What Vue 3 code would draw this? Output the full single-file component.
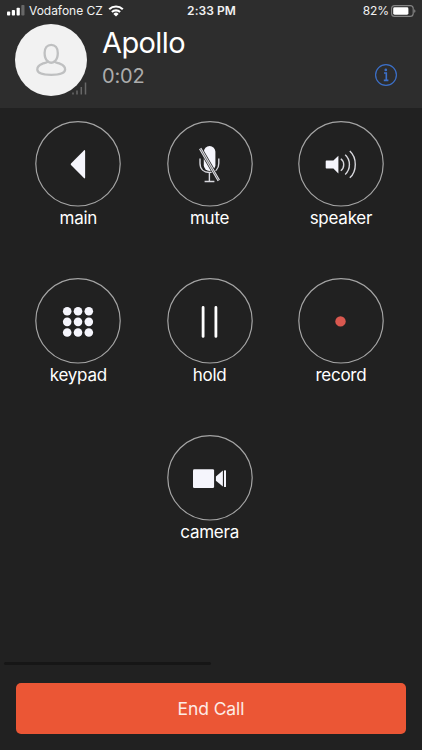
<template>
  <div class="call-screen">
    <header class="header">
      <div class="status-bar">
        <div class="carrier">
          <svg class="signal" width="18" height="11" viewBox="0 0 18 11">
            <rect x="0" y="6.5" width="3.2" height="4" rx=".8" />
            <rect x="4.8" y="5" width="3.2" height="5.5" rx=".8" />
            <rect x="9.6" y="2.8" width="3.2" height="7.7" rx=".8" />
            <rect x="14.3" y="0" width="3.2" height="10.5" rx=".8" opacity=".28" />
          </svg>
          <span class="carrier-name">Vodafone CZ</span>
          <svg class="wifi" width="16" height="12" viewBox="0 0 16 12">
            <path d="M1.2 4.3a9.7 9.7 0 0 1 13.6 0M3.9 7a5.9 5.9 0 0 1 8.2 0" />
            <path class="solid" d="M8 11.5 5.4 8.9a3.7 3.7 0 0 1 5.2 0Z" />
          </svg>
        </div>
        <span class="clock">2:33 PM</span>
        <div class="power">
          <span class="percent">82%</span>
          <svg width="25" height="12" viewBox="0 0 25 12">
            <rect class="shell" x=".6" y=".6" width="21.6" height="10.8" rx="3" />
            <rect x="2.2" y="2.3" width="15.2" height="7.4" rx="1.4" fill="#fff" />
            <path d="M23.2 4.2c1.7.5 1.7 3.1 0 3.6Z" fill="#858585" />
          </svg>
        </div>
      </div>

      <div class="contact">
        <div class="avatar">
          <svg width="72" height="72" viewBox="0 0 72 72">
            <path d="M29.6 29c0-5 2.6-8.1 6.6-8.1s6.6 3.1 6.6 8.1c0 3.5-1.1 6.6-2.9 8.2v.7c1.2 1.1 3.2 1.2 5.3 2 3.3 1.2 4.9 2.8 4.9 5.6 0 3.7-5.6 5.3-13.9 5.3s-13.9-1.6-13.9-5.3c0-2.8 1.6-4.4 4.9-5.6 2.1-.8 4.1-.9 5.3-2v-.7c-1.8-1.6-2.9-4.7-2.9-8.2Z" />
            <path d="M32.5 37.2c2.2 1.9 5.2 1.9 7.4 0" />
          </svg>
          <svg class="quality" width="15" height="13" viewBox="0 0 15 13">
            <path d="M1 10.5v2M5 8.5v4M9.3 5v7.5M13.5 .5v12" />
          </svg>
        </div>
        <div class="caller">
          <h1>Apollo</h1>
          <p>0:02</p>
        </div>
        <svg class="info" width="22" height="22" viewBox="0 0 22 22">
          <circle cx="11" cy="11" r="10.4" />
          <circle class="dot" cx="10.8" cy="5.9" r="1.35" />
          <path d="M9 9h2.3v7.2M8.8 16.4h4.6" />
        </svg>
      </div>
    </header>

    <main class="actions">
      <button v-for="a in actions" :key="a.name" class="action" :class="a.name">
        <svg width="86" height="86" viewBox="0 0 86 86">
          <circle class="ring" cx="43" cy="42.8" r="42.2" />

          <path v-if="a.name === 'main'" class="fill"
                d="M36 42.5 48.9 29.4q1.2-.9 1.2.6v26.5q0 1.5-1.2.6L36 44q-.6-.7 0-1.5Z" />

          <g v-else-if="a.name === 'mute'">
            <rect class="fill" x="36.8" y="25" width="11.6" height="25" rx="5.8" />
            <path class="line" d="M33 37.5v4.8c0 5.8 3.7 9.2 9.4 9.2s9.4-3.4 9.4-9.2v-4.8M42.4 51.5v9M37.6 60.5h9.8" />
            <path class="slash-edge" d="m33.2 27.5 18.6 32" />
            <path class="slash" d="m33.2 27.5 18.6 32" />
            <path class="slash-core" d="m33.2 27.5 18.6 32" />
          </g>

          <g v-else-if="a.name === 'speaker'">
            <path class="fill" d="M28.4 39.6h7l5-4.9v17.7l-5-4.9h-7q-.7 0-.7-.7v-6.5q0-.7.7-.7Z" />
            <path class="line" d="M42.8 37.7c3.9 3 3.9 9 0 12M47.2 33.8c5.6 5 5.6 14.6 0 19.6M51.8 30c7.3 6.7 7.3 20.1 0 26.8" />
          </g>

          <g v-else-if="a.name === 'keypad'" class="fill">
            <circle v-for="n in 9" :key="n" r="4.3"
                    :cx="32.2 + ((n - 1) % 3) * 10.8"
                    :cy="33.2 + Math.floor((n - 1) / 3) * 10.65" />
          </g>

          <path v-else-if="a.name === 'hold'" class="bars" d="M36.1 29.4v29M48.9 29.4v29" />

          <circle v-else-if="a.name === 'record'" cx="42.5" cy="43.4" r="5.2" fill="#d9584f" />

          <g v-else class="fill">
            <rect x="26" y="34.2" width="21.1" height="18.8" rx="1.3" />
            <path d="M48.9 41.4 55.9 35.6v16l-7-5.8Z" />
            <rect x="57" y="35.2" width="2" height="16.8" rx=".6" />
          </g>
        </svg>
        <span>{{ a.name }}</span>
      </button>
    </main>

    <footer class="footer">
      <div class="scroll-track"></div>
      <button class="end-call">End Call</button>
    </footer>
  </div>
</template>

<script setup>
const actions = [
  { name: 'main' },
  { name: 'mute' },
  { name: 'speaker' },
  { name: 'keypad' },
  { name: 'hold' },
  { name: 'record' },
  { name: 'camera' },
]
</script>

<style>
body { margin: 0; background: #212121; }
</style>

<style scoped>
.call-screen {
  display: flex; flex-direction: column; box-sizing: border-box;
  width: 422px; height: 750px; overflow: hidden;
  background: #212121; color: #fff; font-family: Inter, "Liberation Sans", sans-serif;
}
button { padding: 0; border: 0; background: none; color: inherit; font: inherit; }

.header { height: 108px; background: #2d2d2d; }
.status-bar {
  display: grid; grid-template-columns: 1fr auto 1fr; align-items: center;
  height: 21px; padding: 0 6px 0 7px; font-size: 12px; color: #f2f2f2;
}
.carrier, .power { display: flex; align-items: center; }
.power { justify-content: flex-end; gap: 2px; }
.percent { letter-spacing: -.1px; }
.signal { fill: #fff; }
.carrier-name { margin: 0 5px 0 4px; letter-spacing: -.02px; }
.wifi { fill: none; stroke: #fff; stroke-width: 2.1; }
.wifi .solid { fill: #fff; stroke: none; }
.clock { font-weight: 600; letter-spacing: .05px; }
.shell { fill: none; stroke: #858585; stroke-width: 1.1; }

.contact { display: flex; padding: 3px 25px 0 15px; }
.avatar { position: relative; width: 72px; height: 72px; border-radius: 50%; background: #f2f2f2; }
.avatar svg { display: block; fill: none; stroke: #bfc0c1; stroke-width: 2.3; }
.avatar .quality { position: absolute; right: 0; bottom: 1px; stroke: #686868; stroke-width: 1.5; }
.caller { flex: 1; margin-left: 15px; }
h1 { margin: 1px 0 0; font-size: 29px; font-weight: 400; line-height: 36px; letter-spacing: -.6px; }
p { margin: 3px 0 0; font-size: 20px; line-height: 24px; letter-spacing: -.2px; color: #acacac; }
.info { margin-top: 40px; fill: none; stroke: #3c70c9; stroke-width: 1.2; }
.info .dot { fill: #3c70c9; stroke: none; }
.info path { stroke-width: 1.6; }

.actions {
  display: grid; grid-template-columns: repeat(3, 86px); grid-auto-rows: 157px;
  column-gap: 45.3px; padding: 13px 0 0 35.3px;
}
.action {
  display: flex; flex-direction: column; align-items: center;
  font-size: 17px; line-height: 22px; letter-spacing: -.25px;
}
.action svg { display: block; flex: none; }
.action.camera { grid-column: 2; }
.ring { fill: none; stroke: #a5a5a5; stroke-width: 1.2; }
.fill { fill: #f5f5fc; }
.line { fill: none; stroke: #d8d8de; stroke-width: 1.4; }
.slash-edge { stroke: #212121; stroke-width: 4.2; }
.slash { stroke: #e2e2e8; stroke-width: 2.6; }
.slash-core { stroke: #444; stroke-width: .7; }
.bars { stroke: #fff; stroke-width: 2.8; stroke-linecap: round; }

.footer { margin-top: auto; padding: 0 16px 16px; }
.scroll-track { width: 207px; height: 3px; margin: 0 0 18px -12px; border-radius: 2px; background: #161616; }
.end-call {
  display: block; width: 100%; height: 51px; border-radius: 5px;
  background: #eb5635; color: #fdebe6; font-size: 17.5px; letter-spacing: -.1px;
}
</style>
